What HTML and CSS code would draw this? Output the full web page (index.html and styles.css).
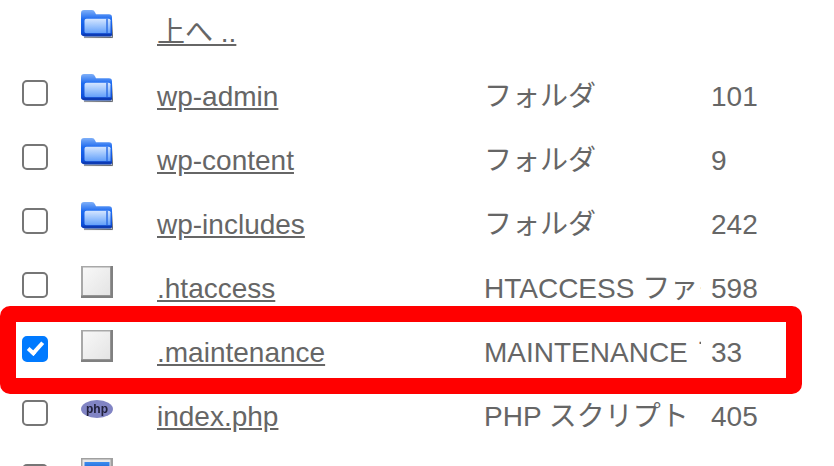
FILE: index.html

```html
<!DOCTYPE html>
<html lang="ja">
<head>
    <meta charset="UTF-8">
    <meta name="viewport" content="width=device-width, initial-scale=1.0">
    <title>ファイルマネージャー</title>
    <link rel="stylesheet" href="styles.css">
</head>
<body>

    <svg class="defs" width="0" height="0" aria-hidden="true">
        <defs>
            <linearGradient id="folder-back" x1="0" y1="0" x2="0" y2="1">
                <stop offset="0" stop-color="#7fb0f8"/>
                <stop offset="0.35" stop-color="#1f6cf0"/>
                <stop offset="1" stop-color="#0a48d4"/>
            </linearGradient>
            <linearGradient id="folder-front" x1="0" y1="0" x2="0" y2="1">
                <stop offset="0" stop-color="#d6e6ff"/>
                <stop offset="0.5" stop-color="#9cc4fd"/>
                <stop offset="1" stop-color="#629ffa"/>
            </linearGradient>
            <linearGradient id="file-face" x1="0" y1="0" x2="1" y2="1">
                <stop offset="0" stop-color="#f8f8f8"/>
                <stop offset="1" stop-color="#e4e4e4"/>
            </linearGradient>
            <linearGradient id="app-bar" x1="0" y1="0" x2="0" y2="1">
                <stop offset="0" stop-color="#3a8df0"/>
                <stop offset="1" stop-color="#1a5fd0"/>
            </linearGradient>
            <filter id="soft"><feGaussianBlur stdDeviation="0.45"/></filter>
            <filter id="softer"><feGaussianBlur stdDeviation="0.3"/></filter>

            <symbol id="icon-folder" viewBox="0 0 32 32">
                <g filter="url(#soft)" transform="scale(1 1.08)">
                    <path d="M2 26h28q2 0 2-2V8l-1 17z" fill="#555c66"/>
                    <rect x="3" y="24.500" width="29" height="1.500" fill="#6b6f78" opacity="0.7"/>
                    <path d="M0 22V3q0-3 3-3h8q2 0 3 2l1 2h13q3 0 3 3v15q0 2-2 2H3q-3 0-3-2z" fill="url(#folder-back)"/>
                    <path d="M3.500 10q0-2 2-2H28q1.500 0 1.500 1.500V21.500H5q-1.500 0-1.500-1.500z" fill="url(#folder-front)"/>
                    <path d="M25 8h2v13.500h-2z" fill="#2f6fe4" opacity="0.75"/>
                    <path d="M1 22h30v1q0 1.500-1.500 1.500H4q-3 0-3-2.500z" fill="#0a3bb4"/>
                </g>
            </symbol>

            <symbol id="icon-file" viewBox="0 0 32 32">
                <g filter="url(#soft)">
                    <rect x="0" y="0" width="32" height="32" fill="#a8a8a8"/>
                    <rect x="29.500" y="0" width="2.500" height="32" fill="#808080"/>
                    <rect x="0" y="29.500" width="32" height="2.500" fill="#808080"/>
                    <rect x="2" y="1.500" width="27" height="27.500" fill="url(#file-face)"/>
                </g>
            </symbol>

            <symbol id="icon-app" viewBox="0 0 32 32">
                <g filter="url(#soft)">
                    <rect x="0" y="0" width="32" height="32" fill="#a0a0a0"/>
                    <rect x="1.500" y="1.500" width="28" height="28" fill="#e6e6e6"/>
                    <rect x="3.500" y="4" width="25" height="8" fill="url(#app-bar)"/>
                </g>
            </symbol>
        </defs>
    </svg>

    <div class="file-list">
        <table class="files">
            <tbody>
                <tr>
                    <td class="col-check"></td>
                    <td class="col-icon"><svg class="icon"><use href="#icon-folder"/></svg></td>
                    <td class="col-name"><a href="#">上へ ..</a></td>
                    <td class="col-type"></td>
                    <td class="col-size"></td>
                </tr>
                <tr>
                    <td class="col-check"><input type="checkbox"></td>
                    <td class="col-icon"><svg class="icon"><use href="#icon-folder"/></svg></td>
                    <td class="col-name"><a href="#">wp-admin</a></td>
                    <td class="col-type"><div class="clip">フォルダ</div></td>
                    <td class="col-size">101</td>
                </tr>
                <tr>
                    <td class="col-check"><input type="checkbox"></td>
                    <td class="col-icon"><svg class="icon"><use href="#icon-folder"/></svg></td>
                    <td class="col-name"><a href="#">wp-content</a></td>
                    <td class="col-type"><div class="clip">フォルダ</div></td>
                    <td class="col-size">9</td>
                </tr>
                <tr>
                    <td class="col-check"><input type="checkbox"></td>
                    <td class="col-icon"><svg class="icon"><use href="#icon-folder"/></svg></td>
                    <td class="col-name"><a href="#">wp-includes</a></td>
                    <td class="col-type"><div class="clip">フォルダ</div></td>
                    <td class="col-size">242</td>
                </tr>
                <tr>
                    <td class="col-check"><input type="checkbox"></td>
                    <td class="col-icon"><svg class="icon"><use href="#icon-file"/></svg></td>
                    <td class="col-name"><a href="#">.htaccess</a></td>
                    <td class="col-type"><div class="clip">HTACCESS ファイル</div></td>
                    <td class="col-size">598</td>
                </tr>
                <tr>
                    <td class="col-check"><input type="checkbox" checked></td>
                    <td class="col-icon"><svg class="icon"><use href="#icon-file"/></svg></td>
                    <td class="col-name"><a href="#">.maintenance</a></td>
                    <td class="col-type"><div class="clip">MAINTENANCE ファイル</div></td>
                    <td class="col-size">33</td>
                </tr>
                <tr>
                    <td class="col-check"><input type="checkbox"></td>
                    <td class="col-icon">
                        <svg class="icon" viewBox="0 0 32 32">
                            <ellipse cx="16" cy="15" rx="16" ry="9" fill="#8184c4" filter="url(#soft)"/>
                            <text class="php-label" x="16" y="18.500" filter="url(#softer)">php</text>
                        </svg>
                    </td>
                    <td class="col-name"><a href="#">index.php</a></td>
                    <td class="col-type"><div class="clip">PHP スクリプト</div></td>
                    <td class="col-size">405</td>
                </tr>
                <tr>
                    <td class="col-check"><input type="checkbox"></td>
                    <td class="col-icon"><svg class="icon"><use href="#icon-app"/></svg></td>
                    <td class="col-name"></td>
                    <td class="col-type"></td>
                    <td class="col-size"></td>
                </tr>
            </tbody>
        </table>

        <!-- 赤枠 -->
        <div class="highlight"></div>
    </div>

</body>
</html>
```

FILE: styles.css

```css
html, body {
    margin: 0;
    padding: 0;
    height: 100%;
    overflow: hidden;
    background-color: #fff;
}
body {
    font-family: "Liberation Sans", "Noto Sans CJK JP", sans-serif;
    font-size: 28px;
    color: #666;
}
.defs {
    position: absolute;
}
.file-list {
    position: relative;
    width: 834px;
}
.files {
    width: 834px;
    table-layout: fixed;
    border-collapse: collapse;
}
.files td {
    height: 64px;
    padding: 0;
    box-sizing: border-box;
    vertical-align: top;
    white-space: nowrap;
}
.col-check {
    width: 81px;
    padding-left: 22px !important;
}
.col-check input {
    appearance: none;
    position: relative;
    display: block;
    box-sizing: border-box;
    width: 26px;
    height: 26px;
    margin: 16px 0 0 0;
    background-color: #fff;
    border: 2px solid #767676;
    border-radius: 5px;
}
.col-check input:checked {
    background-color: #007aff;
    border-color: #007aff;
}
/* la marca del checkbox */
.col-check input:checked::after {
    content: "";
    position: absolute;
    left: 7px;
    top: 1px;
    width: 5px;
    height: 12px;
    border-right: 4px solid #fff;
    border-bottom: 4px solid #fff;
    transform: rotate(42deg);
}
.col-icon {
    width: 76px;
}
.icon {
    display: block;
    width: 32px;
    height: 32px;
    margin-top: 10px;
}
.col-name {
    width: 328px;
    line-height: 32px;
    padding-top: 17px !important;
}
.col-name a {
    color: #666;
}
.col-type {
    width: 226px;
    line-height: 32px;
    padding-top: 17px !important;
    padding-right: 10px !important;
}
.clip {
    overflow: hidden;
    margin-left: -1px;
}
.col-size {
    line-height: 32px;
    padding-top: 17px !important;
}
.php-label {
    font-family: "Liberation Sans", sans-serif;
    font-size: 12px;
    font-weight: bold;
    text-anchor: middle;
    fill: #20203c;
}
.highlight {
    position: absolute;
    left: 0;
    top: 306px;
    width: 802px;
    height: 88px;
    box-sizing: border-box;
    border: 16px solid #f00;
    border-radius: 10px;
}
```
